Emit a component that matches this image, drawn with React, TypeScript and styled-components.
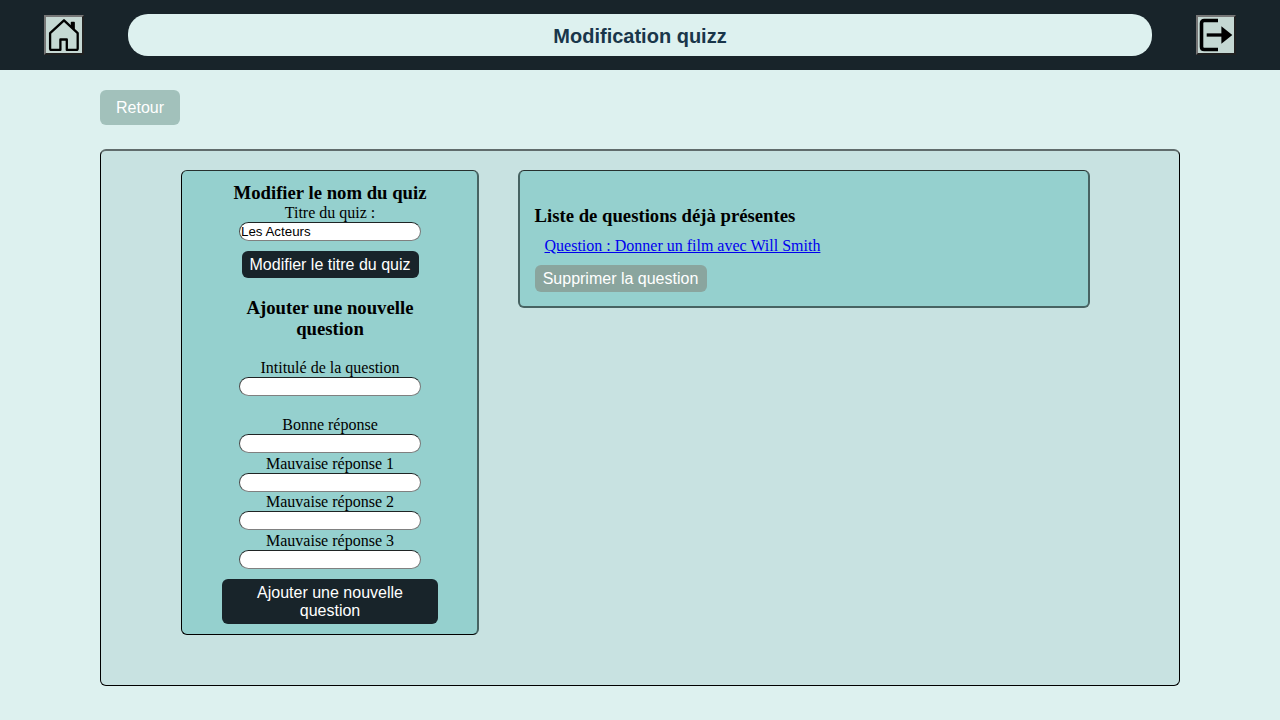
import React from "react";
import styled, { createGlobalStyle } from "styled-components";

const ink = "#18242a";
const soft = "rgba(0, 0, 0, 0.52)";
const sans = `"Liberation Sans", Arial, sans-serif`;

const GlobalStyle = createGlobalStyle`
  * { box-sizing: border-box; }
  body {
    margin: 0;
    background: #ddf1ef;
    color: #000;
    font: 16px/18px "Liberation Serif", "Times New Roman", serif;
  }
`;

const Page = styled.div`
  min-height: 720px;
`;

const Header = styled.header`
  display: flex;
  align-items: center;
  height: 70px;
  padding: 0 44px;
  gap: 44px;
  background: ${ink};
`;

const IconButton = styled.button`
  flex: none;
  width: 40px;
  height: 40px;
  padding: 0;
  border: 2px solid;
  border-color: #767676 #212121 #212121 #767676;
  background: #c5d8d3;
  svg { display: block; }
`;

const PageTitle = styled.h1`
  flex: 1;
  margin: 0;
  height: 42px;
  border-radius: 20px;
  background: #ddf1ef;
  color: #19364a;
  font: bold 20px/45px ${sans};
  text-align: center;
`;

const Main = styled.main`
  padding: 20px 100px 0;
`;

const Button = styled.button<{ $bg?: string }>`
  display: block;
  padding: 4px 8px;
  border: 0;
  border-radius: 6px;
  background: ${(p) => p.$bg ?? ink};
  color: #fff;
  font: 16px/18px ${sans};
`;

const BackButton = styled(Button)`
  width: 80px;
  height: 35px;
  padding: 0;
`;

const Board = styled.section`
  display: flex;
  align-items: flex-start;
  gap: 39px;
  height: 537px;
  margin-top: 24px;
  padding: 19px 80px 0;
  border: 1px solid #000;
  border-top: 2px solid ${soft};
  border-radius: 6px;
  background: #c8e2e1;
`;

const Panel = styled.div`
  border: 1px solid #000;
  border-radius: 6px;
  background: #95d0ce;
`;

const EditPanel = styled(Panel)`
  display: flex;
  flex-direction: column;
  align-items: center;
  width: 298px;
  height: 465px;
  padding: 11px 39px 0 40px;
  border-top-color: #26312f;
  border-right: 2px solid ${soft};
  text-align: center;
`;

const ListPanel = styled(Panel)`
  width: 572px;
  height: 138px;
  padding: 34px 14px 0 14.5px;
  border: 2px solid ${soft};
  border-top: 1px solid #26312f;
`;

const Heading = styled.h3<{ $gap?: string }>`
  margin: ${(p) => p.$gap ?? "0"};
  font-size: 18.72px;
  line-height: 21px;
`;

const Field = styled.label<{ $top?: number }>`
  display: flex;
  flex-direction: column;
  align-items: center;
  height: 38.5px;
  margin-top: ${(p) => p.$top ?? 0}px;
  line-height: 19px;
`;

const TextInput = styled.input`
  display: block;
  width: 182px;
  height: 19px;
  padding: 1px;
  border: 1px solid;
  border-color: #1f2424 #767676 #808080 #4a4a4a;
  border-radius: 10px;
  background: #fff;
  color: #000;
  font: 13.333px ${sans};
`;

const RenameButton = styled(Button)`
  margin-top: 9.5px;
  width: 177px;
  height: 27px;
  padding: 0;
  white-space: nowrap;
`;

const AddButton = styled(Button)`
  width: 216px;
  height: 45px;
  margin-top: 10px;
  padding: 5px 30px 4px;
`;

const QuestionLink = styled.a`
  display: block;
  width: max-content;
  margin: 11px 0 0 10px;
  color: #0000ee;
  text-decoration: underline;
`;

const DeleteButton = styled(Button)`
  width: 172px;
  height: 27px;
  margin-top: 10px;
  padding: 0;
  white-space: nowrap;
`;

const HomeIcon = () => (
  <svg width="36" height="36" viewBox="0 0 36 36" fill="none" stroke="#000" strokeWidth="2.3" strokeLinejoin="round" strokeLinecap="round">
    <path d="M4.1 16.2 18 3.3 31.7 16.2V31.5Q31.7 32.9 30.3 32.9H20.8V22.5H14.4V32.9H5.5Q4.1 32.9 4.1 31.5Z" />
    <path d="M25.5 5.4h2.6v6.1l-2.6-2.4Z" fill="#000" strokeWidth="1.5" />
  </svg>
);

const LogoutIcon = () => (
  <svg width="36" height="36" viewBox="0 0 36 36" fill="none" stroke="#000" strokeWidth="3.6">
    <path d="M20 3.5H6.2Q3.5 3.5 3.5 6.2V29.8Q3.5 32.5 6.2 32.5H20" />
    <path d="M8.7 18H26" strokeWidth="3.3" />
    <path d="M23.4 9.2 34.3 18 23.4 26.8Z" fill="#000" stroke="none" />
  </svg>
);

export default function App() {
  return (
    <Page>
      <GlobalStyle />
      <Header>
        <IconButton aria-label="Accueil"><HomeIcon /></IconButton>
        <PageTitle>Modification quizz</PageTitle>
        <IconButton aria-label="Déconnexion"><LogoutIcon /></IconButton>
      </Header>
      <Main>
        <BackButton $bg="#a2c1bb">Retour</BackButton>
        <Board>
          <EditPanel>
            <Heading>Modifier le nom du quiz</Heading>
            <Field>
              Titre du quiz :
              <TextInput defaultValue="Les Acteurs" />
            </Field>
            <RenameButton>Modifier le titre du quiz</RenameButton>
            <Heading $gap="19px 0">Ajouter une nouvelle question</Heading>
            <Field>
              Intitulé de la question
              <TextInput />
            </Field>
            <Field $top={18.5}>
              Bonne réponse
              <TextInput />
            </Field>
            <Field>
              Mauvaise réponse 1
              <TextInput />
            </Field>
            <Field>
              Mauvaise réponse 2
              <TextInput />
            </Field>
            <Field>
              Mauvaise réponse 3
              <TextInput />
            </Field>
            <AddButton>Ajouter une nouvelle question</AddButton>
          </EditPanel>
          <ListPanel>
            <Heading>Liste de questions déjà présentes</Heading>
            <QuestionLink href="#">Question : Donner un film avec Will Smith</QuestionLink>
            <DeleteButton $bg="#8aa59e">Supprimer la question</DeleteButton>
          </ListPanel>
        </Board>
      </Main>
    </Page>
  );
}
